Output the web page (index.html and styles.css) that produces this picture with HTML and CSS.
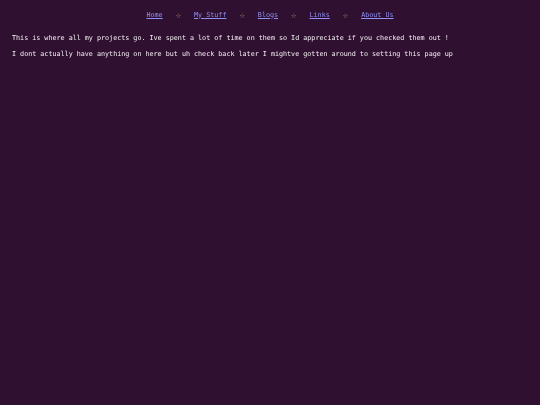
FILE: index.html
```html
<!DOCTYPE html>
<html>
<head>
<meta charset="utf-8">
<link rel="stylesheet" href="styles.css">
</head>
<body>
<nav class="nav">
<a href="#">Home</a><span class="star">☆</span><a href="#">My Stuff</a><span class="star">☆</span><a href="#">Blogs</a><span class="star">☆</span><a href="#">Links</a><span class="star">☆</span><a href="#">About Us</a>
</nav>
<main class="content">
<p>This is where all my projects go. Ive spent a lot of time on them so Id appreciate if you checked them out !</p>
<p>I dont actually have anything on here but uh check back later I mightve gotten around to setting this page up</p>
</main>
</body>
</html>
```
FILE: styles.css
```css
html, body {
  margin: 0;
  padding: 0;
  background: #301030;
  height: 100%;
}
body {
  font-family: "DejaVu Sans Mono", monospace;
  font-size: 6.73px;
  color: #f4f0f4;
  will-change: transform;
}
.nav {
  display: flex;
  justify-content: center;
  align-items: center;
  gap: 13px;
  padding-top: 10px;
  height: 9px;
}
.nav a {
  color: #9090f4;
  text-decoration: underline;
}
.star {
  color: #c08070;
  font-size: 9px;
}
.content {
  padding: 15px 12px 0;
}
.content p {
  margin: 0 0 8px;
  line-height: 8px;
}
```
